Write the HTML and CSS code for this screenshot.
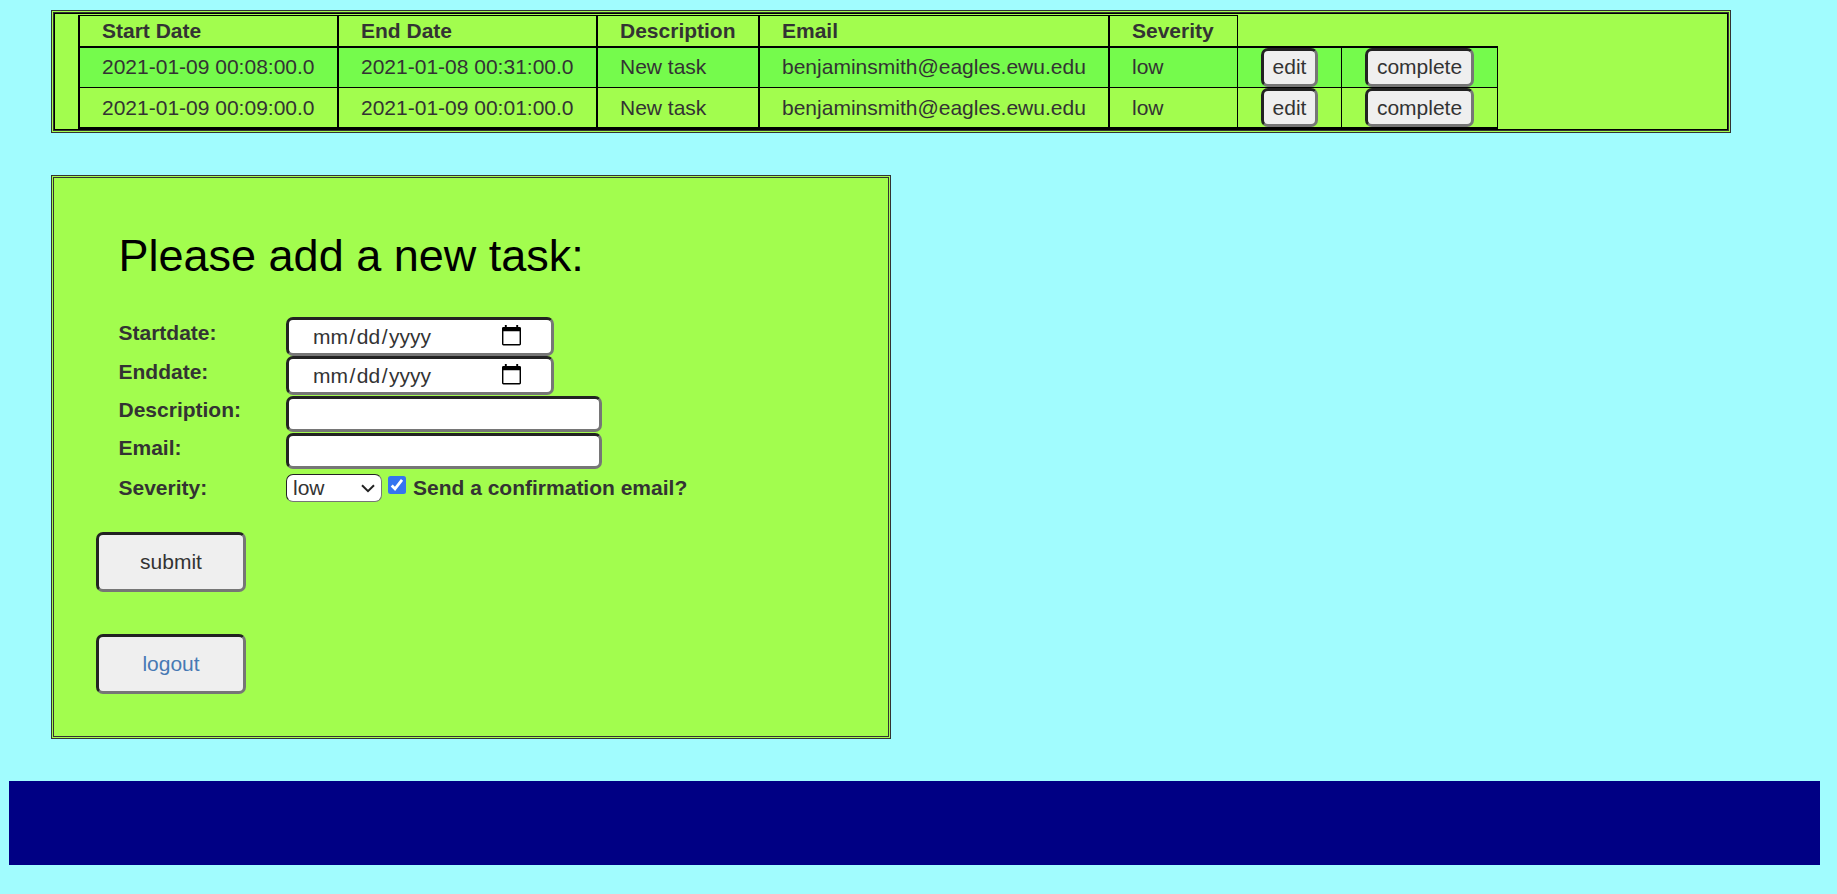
FILE: index.html
```html
<!DOCTYPE html>
<html lang="en">
<head>
<meta charset="utf-8">
<title>Tasks</title>
<link rel="stylesheet" href="styles.css">
</head>
<body>
<main>
  <section class="panel task-panel">
    <div class="task-frame">
      <table class="tasks">
        <colgroup><col class="c-date"><col class="c-date"><col class="c-desc"><col class="c-email"><col class="c-sev"><col class="c-edit"><col class="c-done"></colgroup>
        <tr class="head"><th>Start Date</th><th>End Date</th><th>Description</th><th>Email</th><th>Severity</th><th class="thin blank"></th><th class="blank none"></th></tr>
        <tr class="odd"><td>2021-01-09 00:08:00.0</td><td>2021-01-08 00:31:00.0</td><td>New task</td><td>benjaminsmith@eagles.ewu.edu</td><td>low</td><td class="thin action"><button class="btn edit">edit</button></td><td class="thin last action"><button class="btn complete">complete</button></td></tr>
        <tr class="even"><td>2021-01-09 00:09:00.0</td><td>2021-01-09 00:01:00.0</td><td>New task</td><td>benjaminsmith@eagles.ewu.edu</td><td>low</td><td class="thin action"><button class="btn edit">edit</button></td><td class="thin last action"><button class="btn complete">complete</button></td></tr>
      </table>
    </div>
  </section>

  <section class="panel form-panel">
    <h2>Please add a new task:</h2>
    <form>
      <div class="row date-row"><label>Startdate:</label><div class="field date"><span class="mask">mm<i>/</i>dd<i>/</i>yyyy</span><svg class="cal" width="19" height="21" viewBox="0 0 20 22" preserveAspectRatio="none"><path d="M3 0h2v2h10V0h2v2h1.500a1.500 1.500 0 0 1 1.500 1.500v16.500a1.500 1.500 0 0 1-1.500 1.500h-17A1.500 1.500 0 0 1 0 20v-16.500A1.500 1.500 0 0 1 1.500 2H3zM1.500 6.500v13.500h17V6.500z" fill="#000" fill-rule="evenodd"/></svg></div></div>
      <div class="row date-row"><label>Enddate:</label><div class="field date"><span class="mask">mm<i>/</i>dd<i>/</i>yyyy</span><svg class="cal" width="19" height="21" viewBox="0 0 20 22" preserveAspectRatio="none"><path d="M3 0h2v2h10V0h2v2h1.500a1.500 1.500 0 0 1 1.500 1.500v16.500a1.500 1.500 0 0 1-1.500 1.500h-17A1.500 1.500 0 0 1 0 20v-16.500A1.500 1.500 0 0 1 1.500 2H3zM1.500 6.500v13.500h17V6.500z" fill="#000" fill-rule="evenodd"/></svg></div></div>
      <div class="row text-row first"><label>Description:</label><input class="field text" type="text"></div>
      <div class="row text-row"><label>Email:</label><input class="field text" type="text"></div>
      <div class="row sev-row"><label>Severity:</label>
        <div class="select"><span>low</span><svg width="14" height="9" viewBox="0 0 14 9"><path d="M1 1.200l6 6 6-6" fill="none" stroke="#222" stroke-width="2"/></svg></div>
        <svg class="check" width="18" height="18" viewBox="0 0 18 18"><rect width="18" height="18" rx="2.500" fill="#3574f0"/><path d="M3.700 9.500l3.300 3.300 7-9" fill="none" stroke="#fff" stroke-width="2.800"/></svg>
        <span class="confirm">Send a confirmation email?</span>
      </div>
    </form>
    <button class="btn big">submit</button>
    <button class="btn big logout">logout</button>
  </section>
</main>
<footer></footer>
</body>
</html>
```

FILE: styles.css
```css
* { box-sizing: border-box; }
body {
  margin: 0;
  padding: 10px 17px 0 9px;
  height: 894px;
  overflow: hidden;
  background: #a1fcfe;
  color: #333;
  font: 21px/30px "Liberation Sans", Arial, sans-serif;
}
main { padding-left: 42px; }
.panel {
  border: 3px double #333;
  background: #a2fd4e;
}
.task-panel { width: 1680px; height: 123px; }
.task-frame {
  height: 117px;
  border: 1px solid #000;
  padding: 1px 0 0 23px;
}
.tasks {
  width: 1420px;
  table-layout: fixed;
  border-collapse: separate;
  border-spacing: 0;
}
.c-date { width: 259px; }
.c-desc { width: 162px; }
.c-email { width: 350px; }
.c-sev { width: 129px; }
.c-edit { width: 104px; }
.c-done { width: 157px; }
.tasks th, .tasks td {
  padding: 0 0 0 22px;
  border: 0 solid #000;
  border-left-width: 2px;
  text-align: left;
  vertical-align: middle;
  white-space: nowrap;
}
.tasks th { height: 31px; border-top-width: 1px; }
.tasks .thin { border-left-width: 1px; padding-left: 23px; }
.tasks .last { border-right-width: 1px; }
.tasks .blank { border-top-width: 0; }
.tasks .none { border-left-width: 0; }
.odd td { height: 41px; border-top-width: 2px; background: #75fb4c; }
.tasks .odd td:not(.action) { padding-bottom: 2px; }
.odd .btn { padding-bottom: 2px; }
.even td { height: 42px; border-top-width: 1px; border-bottom-width: 2px; }

.btn {
  display: block;
  height: 39px;
  margin: 0;
  padding: 0;
  border: 3px solid;
  border-color: #222 #767676 #767676 #222;
  border-radius: 7px;
  background: #efefef;
  color: #333;
  font: inherit;
}
.edit { width: 57px; }
.complete { width: 109px; }

.form-panel {
  width: 840px;
  height: 564px;
  margin-top: 42px;
  padding: 50px 0 0 42px;
}
h2 {
  margin: 0 0 34px 22.500px;
  font-size: 45px;
  line-height: 55px;
  font-weight: 400;
  color: #000;
}
form { padding-left: 22px; }
.row { display: flex; align-items: flex-start; height: 37px; }
.row label, .confirm { font-weight: 700; line-height: 30px; }
.row label { width: 168px; padding-left: 0.500px; }
.date-row { height: 39px; }
.date-row label { line-height: 32px; }
.text-row.first { margin-top: 1px; }
.text-row.first label { line-height: 28px; }
.field {
  border: 3px solid;
  border-color: #222 #767676 #767676 #222;
  border-radius: 7px;
  background: #fff;
}
.date {
  display: flex;
  justify-content: space-between;
  width: 268px;
  height: 39px;
  padding: 0 30px 0 24px;
}
.mask { line-height: 33px; }
.mask i { font-style: normal; padding: 0 1.500px; }
.cal { margin-top: 5px; }
.text { width: 316px; height: 36px; outline: 0; }
.sev-row { padding-top: 4px; }
.sev-row label, .confirm { line-height: 28px; }
.select {
  display: flex;
  align-items: center;
  justify-content: space-between;
  width: 96px;
  height: 28px;
  padding: 0 6px;
  border: 1px solid;
  border-color: #222 #767676 #767676 #222;
  border-radius: 7px;
  background: #fff;
}
.check { margin: 2px 7px 0 6px; }
.big { width: 150px; height: 60px; margin-top: 42px; }
form + .big { margin-top: 25px; }
.logout { color: #4779b4; }
footer { height: 84px; margin-top: 42px; background: #000084; }
```
